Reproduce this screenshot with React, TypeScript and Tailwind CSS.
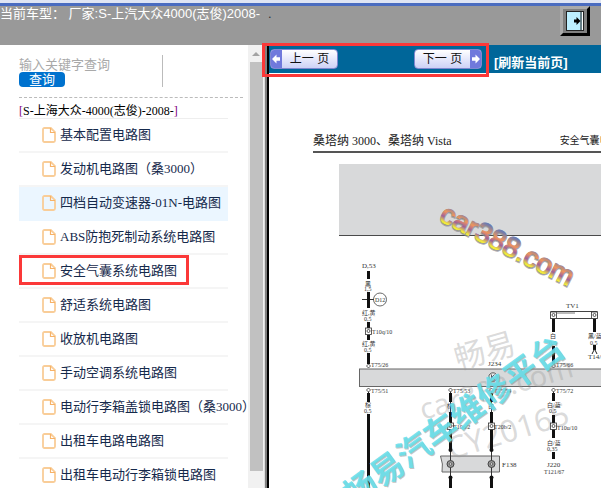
const circuits = [
  { name: "基本配置电路图" },
  { name: "发动机电路图（桑3000）" },
  { name: "四档自动变速器-01N-电路图", active: true },
  { name: "ABS防抱死制动系统电路图" },
  { name: "安全气囊系统电路图", marked: true },
  { name: "舒适系统电路图" },
  { name: "收放机电路图" },
  { name: "手动空调系统电路图" },
  { name: "电动行李箱盖锁电路图（桑3000）" },
  { name: "出租车电路电路图" },
  { name: "出租车电动行李箱锁电路图" },
];

// [x, y1, y2]
const wires = [
  [368, 271, 279],
  [368, 292, 308],
  [368, 322, 328],
  [368, 335, 340],
  [368, 353, 364],
  [368, 393, 402],
  [368, 414, 500],
  [450, 393, 402],
  [450, 412, 423],
  [450, 429, 451],
  [450, 477, 500],
  [491, 393, 402],
  [491, 412, 423],
  [491, 429, 451],
  [491, 477, 500],
  [553, 319, 332],
  [553, 346, 364],
  [553, 393, 401],
  [553, 415, 423],
  [553, 429, 438],
  [553, 452, 459],
  [594, 319, 332],
  [594, 345, 350],
];

const labels = [
  { x: 362, y: 268, t: "D,53", s: 7 },
  { x: 365, y: 286, t: "黑", s: 6 },
  { x: 364, y: 291, t: "1,5", s: 6 },
  { x: 375, y: 302, t: "D12", s: 6 },
  { x: 362, y: 315, t: "红,黄", s: 6 },
  { x: 364, y: 321, t: "0,5", s: 6 },
  { x: 372, y: 334, t: "T10q/10", s: 6 },
  { x: 362, y: 346, t: "红,黄", s: 6 },
  { x: 364, y: 352, t: "0,5", s: 6 },
  { x: 371, y: 367, t: "T75/26", s: 6 },
  { x: 371, y: 393, t: "T75/51", s: 6 },
  { x: 365, y: 407, t: "棕", s: 6 },
  { x: 364, y: 413, t: "0,5", s: 6 },
  { x: 453, y: 393, t: "T75/53", s: 6 },
  { x: 447, y: 408, t: "棕", s: 6 },
  { x: 453, y: 429, t: "T10o/2", s: 6 },
  { x: 494, y: 393, t: "T75/54", s: 6 },
  { x: 488, y: 408, t: "白", s: 6 },
  { x: 494, y: 429, t: "T20b/2", s: 6 },
  { x: 488, y: 366, t: "J234", s: 7 },
  { x: 502, y: 467, t: "F138", s: 7 },
  { x: 566, y: 308, t: "TV1", s: 7 },
  { x: 550, y: 338, t: "白", s: 6 },
  { x: 549, y: 345, t: "0,5", s: 6 },
  { x: 556, y: 367, t: "T75/66", s: 6 },
  { x: 556, y: 393, t: "T75/72", s: 6 },
  { x: 547, y: 407, t: "白/蓝", s: 6 },
  { x: 549, y: 413, t: "0,5", s: 6 },
  { x: 557, y: 430, t: "T10u/10", s: 6 },
  { x: 547, y: 445, t: "白/蓝", s: 6 },
  { x: 547, y: 451, t: "0,35", s: 6 },
  { x: 547, y: 467, t: "J220", s: 7 },
  { x: 544, y: 474, t: "T121/67", s: 6 },
  { x: 588, y: 338, t: "黑/蓝", s: 6 },
  { x: 590, y: 345, t: "0,5", s: 6 },
  { x: 588, y: 359, t: "T14/8", s: 7 },
];

const connectors = [
  [368, 331],
  [450, 426],
  [491, 426],
  [553, 426],
  [553, 315],
  [594, 315],
];

const terminals = [
  [368, 366],
  [368, 390],
  [450, 390],
  [491, 390],
  [553, 366],
  [553, 390],
];

function FileIcon() {
  return (
    <svg width="14" height="16" viewBox="0 0 14 16" fill="none" className="shrink-0">
      <path d="M2.5 1H8.8L13 5.2V13.5Q13 15 11.5 15H2.5Q1 15 1 13.5V2.5Q1 1 2.5 1Z" stroke="#f9cd98" strokeWidth="1.8" />
      <path d="M8.5 1V5.5H13" stroke="#f7b267" strokeWidth="1.2" />
    </svg>
  );
}

function ArrowEnd({ flip = false }) {
  return (
    <svg width="11" height="18" viewBox="0 0 11 18" className="shrink-0">
      <rect width="11" height="18" fill="#7079dc" />
      <path
        d="M1 9L5.5 4.5V7.3H9V10.7H5.5V13.5Z"
        fill="#fff"
        transform={flip ? "rotate(180 5.5 9)" : undefined}
      />
    </svg>
  );
}

function Diagram() {
  return (
    <svg
      width="332"
      height="335"
      viewBox="269 153 332 335"
      className="block overflow-visible"
      fontFamily="'Liberation Serif', 'Noto Sans CJK SC', serif"
    >
      <defs>
        <linearGradient id="rainbow" x1="0" y1="0" x2="0" y2="1">
          <stop offset="0.2" stopColor="#6d7bb0" />
          <stop offset="0.45" stopColor="#f0955c" />
          <stop offset="0.62" stopColor="#a0609a" />
          <stop offset="0.78" stopColor="#f4ea3c" />
        </linearGradient>
      </defs>

      <rect x="339" y="164" width="900" height="71" fill="#d8d9da" />
      <path d="M339 235.5H1239" stroke="#4a4a4a" />
      <rect x="359.5" y="369" width="880" height="17.5" fill="#d8d9da" stroke="#666" />
      <path d="M440.5 456H499.5V472H442Q443.5 464 440.5 456Z" fill="#d8d9da" stroke="#666" />
      <path d="M551 311.5H597M551 318.5H597M551 311V319M597 311V319" stroke="#444" />
      <path d="M557 313H575" stroke="#777" />

      {/* Grey watermark */}
      <g fill="#999" fillOpacity="0.36" fontFamily="'Noto Sans', 'Noto Sans CJK SC', sans-serif">
        <text transform="translate(458 370) rotate(-16)" fontSize="31">畅易</text>
        <text transform="translate(423 420) rotate(-16)" fontSize="29">car388.com</text>
        <text transform="translate(451 460) rotate(-17)" fontSize="31">CY20165</text>
      </g>

      {/* Wiring */}
      <path
        d="M368.5 390V402M450.5 390V488M491.5 390V488M553.5 390V400M362 299.5H374"
        stroke="#333"
      />
      {wires.map(([x, y1, y2]) => (
        <path key={`${x}-${y1}`} d={`M${x + 0.5} ${y1}V${y2}`} stroke="#111" strokeWidth="3" />
      ))}
      {connectors.map(([x, y]) => (
        <g key={`${x}-${y}`} fill="#fff" stroke="#333" strokeWidth="0.8">
          <rect x={x - 2.5} y={y - 3} width="6" height="6.5" />
          <circle cx={x + 0.5} cy={y} r="1.5" />
        </g>
      ))}
      {terminals.map(([x, y]) => (
        <path key={`${x}-${y}`} d={`M${x - 1.5} ${y}L${x + 0.5} ${y - 2}L${x + 2.5} ${y}L${x + 0.5} ${y + 2}Z`} fill="#fff" stroke="#333" strokeWidth="0.8" />
      ))}
      {[450.5, 491.5].map((x) => (
        <g key={x}>
          <circle cx={x} cy="464" r="3.5" fill="#999" stroke="#444" />
          <circle cx={x} cy="464" r="1.3" fill="#ddd" stroke="#444" strokeWidth="0.7" />
          <circle cx={x} cy="450" r="2" fill="#111" />
          <circle cx={x} cy="477.5" r="2" fill="#111" />
        </g>
      ))}
      <path d="M592 354L594.5 349L597 354" fill="none" stroke="#222" />
      <circle cx="380" cy="299.5" r="6.5" fill="none" stroke="#444" strokeWidth="0.8" />
      <circle cx="493" cy="377" r="4.2" fill="#eee" stroke="#333" strokeWidth="0.8" />
      <path d="M491.5 374.5V379.5M494.5 374.5L492 377L494.5 379.5" fill="none" stroke="#333" strokeWidth="0.8" />
      {labels.map((l) => (
        <text key={`${l.x}-${l.y}`} x={l.x} y={l.y} fontSize={l.s} fill="#333">
          {l.t}
        </text>
      ))}

      {/* Cyan watermark */}
      <g fontFamily="'Noto Sans CJK SC', sans-serif" fontWeight="700" fontSize="33">
        <text transform="translate(355 509) rotate(-36)" fill="#888" fillOpacity="0.5">畅易汽车维修平台</text>
        <text transform="translate(354 508) rotate(-36)" fill="#66e0ec" fillOpacity="0.9">畅易汽车维修平台</text>
      </g>

      <g fontFamily="'Liberation Sans', sans-serif" fontSize="28">
        <text transform="translate(438 221) rotate(27)" fill="#888" stroke="#8a8a90" strokeWidth="2.2" strokeOpacity="0.7">car388.com</text>
        <text transform="translate(438 220) rotate(27)" fill="url(#rainbow)" stroke="url(#rainbow)" strokeWidth="0.9">car388.com</text>
      </g>
    </svg>
  );
}

export default function App() {
  return (
    <div className="h-screen flex flex-col overflow-hidden bg-white font-['Liberation_Sans','Noto_Sans_CJK_SC',sans-serif] text-[13px]">
      {/* Header */}
      <div className="h-[3px] shrink-0 bg-[#dfe5f4]"></div>
      <div className="h-[3px] shrink-0 bg-[#4a6cc0]"></div>
      <header className="h-[39px] shrink-0 bg-[#999999] flex items-start justify-between pr-[11px] text-white">
        <p className="leading-4 whitespace-pre">
          当前车型： 厂家:S-上汽大众4000(志俊)2008-<span className="pl-2 text-[#333]">.</span>
        </p>
        <button
          aria-label="切换目录"
          className="size-[30px] bg-[#808080] border-3 border-t-[#aaa] border-l-[#aaa] border-r-black border-b-black flex items-center justify-center"
        >
          <svg width="18" height="20" viewBox="0 0 18 20">
            <rect x="0.5" y="0.5" width="17" height="19" fill="#bdefff" stroke="#222" />
            <path d="M15 1V19" stroke="#111" />
            <path d="M16.5 1V19" stroke="#fff" />
            <path d="M8 8.5H10.5V6L14.5 10L10.5 14V11.5H8Z" fill="#000" />
          </svg>
        </button>
      </header>

      <div className="flex-1 min-h-0 flex">
        {/* Sidebar */}
        <aside className="w-[248px] shrink-0 overflow-hidden pl-[19px] pt-[10px]">
          <form className="w-36 h-8 border-r border-[#bbb] flex flex-col items-start">
            <input
              type="text"
              aria-label="关键字"
              placeholder="输入关键字查询"
              className="w-full h-[17px] pt-0.5 outline-none placeholder:text-[#a9a9a9]"
            />
            <button type="button" className="w-[46px] h-[15px] rounded bg-[#0072ce] text-white leading-[15px]">
              查询
            </button>
          </form>
          <div className="mt-[10px] mr-[5px] border-t border-dashed border-[#bbb]"></div>
          <div className="mr-5 mt-[5px] h-4 border-b border-[#eee] font-['Liberation_Serif','Noto_Sans_CJK_SC',serif] text-[12px] leading-4 whitespace-nowrap text-black">
            <span className="text-[#800080]">[</span>S-上海大众-4000(志俊)-2008-<span className="text-[#800080]">]</span>
          </div>
          <ul className="mr-5 font-['Liberation_Serif','Noto_Sans_CJK_SC',serif]">
            {circuits.map((c) => (
              <li key={c.name} className="relative">
                <a
                  href="#"
                  className={
                    "h-[34px] pl-[23px] flex items-center gap-1 border-b-2 whitespace-nowrap text-[#15294b] " +
                    (c.active ? "bg-[#ebf6ff] border-[#ebf6ff]" : "border-[#f5f5f5]")
                  }
                >
                  <FileIcon />
                  {c.name}
                </a>
                {c.marked && (
                  <div className="absolute left-0 top-0 w-[170px] h-[30px] border-3 border-[#fb3838]"></div>
                )}
              </li>
            ))}
          </ul>
        </aside>

        {/* Scrollbar and frame edge */}
        <div className="w-4 shrink-0 bg-[#f1f1f1] flex flex-col items-center">
          <svg width="8" height="17" viewBox="0 0 8 17" className="shrink-0">
            <path d="M0 11L4 7L8 11Z" fill="#a3a3a3" />
          </svg>
          <div className="w-[13px] flex-1 mb-[17px] bg-[#c1c1c1]"></div>
        </div>
        <div className="w-[5px] shrink-0 bg-[#808080] border-l border-[#ddd] border-r-2 border-r-black"></div>

        {/* Document */}
        <main className="flex-1 min-w-0 flex flex-col">
          <div className="h-7 shrink-0 bg-[#006699] flex items-center gap-3">
            <div className="relative h-full w-[213px] shrink-0 flex items-center justify-between pl-px">
              <button className="w-[68px] h-5 flex items-center rounded-sm border border-[#8088d0] bg-linear-to-b from-white to-[#cdd2f6] overflow-hidden text-[#111]">
                <ArrowEnd />
                <span className="flex-1 text-xs leading-4 whitespace-nowrap">上一 页</span>
              </button>
              <button className="w-[68px] h-5 flex items-center rounded-sm border border-[#8088d0] bg-linear-to-b from-white to-[#cdd2f6] overflow-hidden text-[#111]">
                <span className="flex-1 text-xs leading-4 whitespace-nowrap">下一 页</span>
                <ArrowEnd flip />
              </button>
              <div className="absolute -top-0.5 -bottom-1 -left-[7px] -right-[7px] border-3 border-[#fb3838] pointer-events-none"></div>
            </div>
            <a href="#" className="pt-2 font-bold text-white whitespace-nowrap">
              [刷新当前页]
            </a>
          </div>
          <div className="flex-1 min-h-0 overflow-hidden pt-[57px]">
            <div className="ml-11 flex items-center gap-[108px] h-[23px] border-b-2 border-[#555] whitespace-nowrap text-[#222] font-['Liberation_Serif','Noto_Sans_CJK_SC',serif]">
              <h1 className="shrink-0 text-[12px]">桑塔纳 3000、桑塔纳 Vista</h1>
              <span className="shrink-0 text-[10px]">安全气囊电路图</span>
            </div>
            <Diagram />
          </div>
        </main>
      </div>
    </div>
  );
}
